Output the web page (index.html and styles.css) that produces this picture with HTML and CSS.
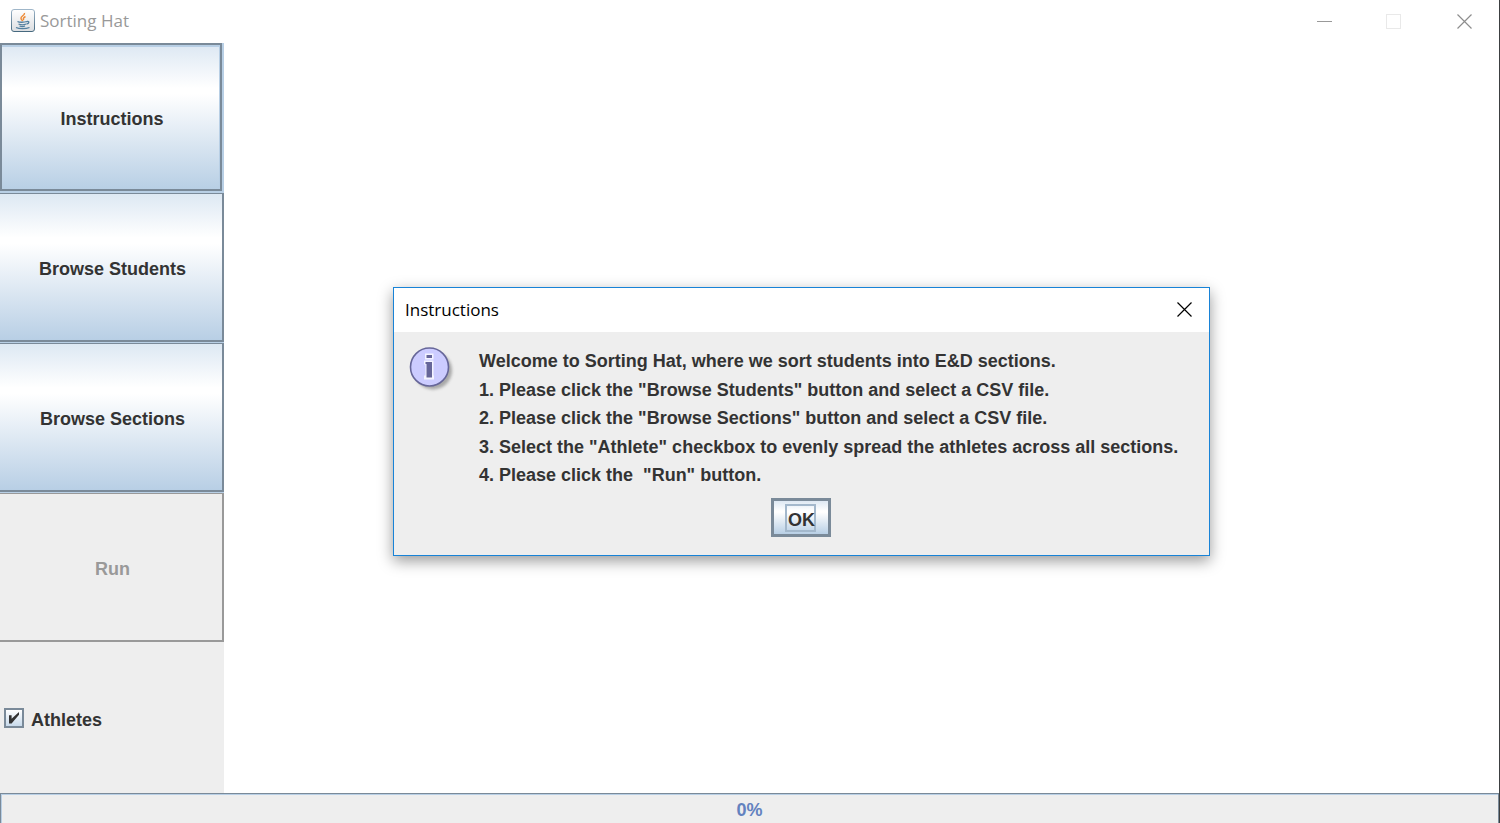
FILE: index.html
```html
<!DOCTYPE html>
<html lang="en">
<head>
<meta charset="utf-8">
<title>Sorting Hat</title>
<link rel="stylesheet" href="styles.css">
</head>
<body>
<div class="window">
  <header class="titlebar">
    <svg class="app-icon" width="24" height="24" viewBox="0 0 24 24" aria-hidden="true">
      <defs>
        <linearGradient id="frame" x1="0" y1="0" x2="0" y2="1"><stop offset="0" stop-color="#9fb6c9"/><stop offset="1" stop-color="#46697f"/></linearGradient>
        <linearGradient id="face" x1="0" y1="0" x2="0" y2="1"><stop offset="0" stop-color="#ffffff"/><stop offset="1" stop-color="#dcdee1"/></linearGradient>
      </defs>
      <rect x="0.5" y="0.5" width="23" height="22" rx="2.5" fill="url(#face)" stroke="url(#frame)"/>
      <path d="M13.500 4C14 6.500 9.500 7 10 9.500C10.200 10.800 11.500 11.500 11.800 12M14.500 7.500C12.500 8.500 11.800 9.500 12.800 11" fill="none" stroke="#ee8a35" stroke-width="1.500"/>
      <path d="M6.500 12.500C8 13.500 13 13.500 16 12.500M7.500 15C10 16 13 16 15 15M8.500 17C10.500 17.800 12.500 17.800 14 17M16 12.500C18.500 12 18.500 14.500 15.500 15M5 18.500C8 20 15 20 18.500 18.500" fill="none" stroke="#527f9f" stroke-width="1.300"/>
    </svg>
    <h1 class="title">Sorting Hat</h1>
    <div class="controls">
      <button class="control" type="button" aria-label="Minimize"><svg width="16" height="16" viewBox="0 0 16 16"><path d="M1 8.500H16" stroke="#999"/></svg></button>
      <button class="control" type="button" aria-label="Maximize" disabled><svg width="16" height="16" viewBox="0 0 16 16"><rect x="0.500" y="1.500" width="14" height="14" fill="none" stroke="#e9e9e9"/></svg></button>
      <button class="control" type="button" aria-label="Close"><svg width="16" height="16" viewBox="0 0 16 16"><path d="M1.500 1.500L15.500 15.500M15.500 1.500L1.500 15.500" stroke="#8d8d8d" stroke-width="1.200"/></svg></button>
    </div>
  </header>
  <main class="content">
    <nav class="sidebar">
      <button class="tile tile-active" type="button">Instructions</button>
      <button class="tile" type="button">Browse Students</button>
      <button class="tile" type="button">Browse Sections</button>
      <button class="tile" type="button" disabled>Run</button>
      <label class="option"><input class="check" type="checkbox" checked><span class="option-label">Athletes</span></label>
    </nav>
  </main>
  <footer class="progress" role="progressbar" aria-label="Progress" aria-valuemin="0" aria-valuemax="100" aria-valuenow="0">0%</footer>
</div>

<section class="dialog" role="dialog" aria-labelledby="dialog-title">
  <header class="dialog-bar">
    <h2 class="dialog-title" id="dialog-title">Instructions</h2>
    <button class="dialog-close" type="button" aria-label="Close"><svg width="16" height="16" viewBox="0 0 16 16"><path d="M0.500 0.500L14.500 14.500M14.500 0.500L0.500 14.500" stroke="#000" stroke-width="1.200"/></svg></button>
  </header>
  <div class="dialog-body">
    <svg class="info" width="48" height="48" viewBox="0 0 48 48" aria-hidden="true">
      <defs><filter id="soft" x="-20%" y="-20%" width="140%" height="140%"><feGaussianBlur stdDeviation="1.800"/></filter></defs>
      <circle cx="24" cy="23.500" r="19" fill="#8b8b8b" opacity="0.700" filter="url(#soft)"/>
      <circle cx="20.500" cy="20" r="19" fill="#ccccff" stroke="#666699" stroke-width="1.600"/>
      <path d="M16 6.500H24.500V12.500H16ZM15 13.500H24.500V28.500H25V32.500H15V28.500H16.500V17.500H15Z" fill="#f4f4ff"/>
      <path d="M17.500 8H23V11H17.500ZM16.500 15H23V30.500H17.500V17H16.500Z" fill="#666699"/>
    </svg>
    <div class="message">
      <p class="line">Welcome to Sorting Hat, where we sort students into E&amp;D sections.</p>
      <p class="line">1. Please click the "Browse Students" button and select a CSV file.</p>
      <p class="line">2. Please click the "Browse Sections" button and select a CSV file.</p>
      <p class="line">3. Select the "Athlete" checkbox to evenly spread the athletes across all sections.</p>
      <p class="line">4. Please click the&nbsp; "Run" button.</p>
    </div>
  </div>
  <div class="dialog-actions">
    <button class="ok" type="button"><span class="ok-label">OK</span></button>
  </div>
</section>
</body>
</html>
```

FILE: styles.css
```css
* {
  box-sizing: border-box;
}

body {
  margin: 0;
  background: #fff;
  color: #333;
  font: bold 18px "Liberation Sans", Arial, sans-serif;
}

h1, h2, p {
  margin: 0;
}

button {
  padding: 0;
  color: inherit;
  font: inherit;
}

.window {
  display: flex;
  flex-direction: column;
  min-height: 100vh;
  border-right: 1px solid #3c3f41;
}

.titlebar {
  display: flex;
  align-items: center;
  height: 43px;
  padding: 0 0 2px 11px;
}

.title,
.dialog-title {
  font: 17px/24px "Open Sans", "Noto Sans", sans-serif;
}

.title {
  margin-left: 5px;
  color: #999;
}

.controls {
  display: flex;
  margin-left: auto;
}

.control {
  display: grid;
  place-items: center;
  width: 70px;
  height: 40px;
  border: 0;
  background: none;
}

.content {
  display: flex;
  flex: 1;
}

.sidebar {
  display: flex;
  flex-direction: column;
  width: 224px;
  background: #eee;
}

.tile {
  height: 149px;
  margin-bottom: 1px;
  padding: 5px 0 0 3px;
  border: solid #7a8a99;
  border-width: 1px 2px 2px 0;
  background: linear-gradient(#dde8f3 0%, #fff 30%, #fff 34%, #b8cfe5 100%);
  box-shadow: 0 1px #b8cfe5;
}

.tile-active {
  height: 148px;
  margin: 0 2px 2px 0;
  padding-left: 2px;
  border-width: 2px;
  box-shadow: inset -1px 2px #b8cfe5, 2px 0 #b8cfe5, 0 2px #b8cfe5, 2px 2px #b8cfe5;
}

.tile:disabled {
  border-color: #999;
  background: #eee;
  box-shadow: none;
  color: #999;
}

.option {
  display: flex;
  flex: 1;
  align-items: center;
  gap: 7px;
  padding-left: 4px;
}

.option-label {
  padding-top: 4px;
}

.check {
  display: grid;
  place-items: center;
  width: 20px;
  height: 20px;
  margin: 0;
  border: 2px solid #7a8a99;
  background: linear-gradient(#fff, #c8daeb);
  appearance: none;
}

.check::after {
  content: "";
  width: 10px;
  height: 12px;
  background: #333;
  clip-path: polygon(0 28%, 26% 28%, 26% 56%, 100% 0, 100% 22%, 26% 96%, 0 96%);
}

.progress {
  display: grid;
  place-items: center;
  height: 30px;
  padding-top: 4px;
  border: solid #7a8a99;
  border-width: 1px 1px 0;
  background: #eee;
  box-shadow: inset 1px 1px #b8cfe5;
  color: #6382bf;
}

.dialog {
  position: absolute;
  top: 287px;
  left: 393px;
  width: 817px;
  border: 1px solid #1883d7;
  background: #eee;
  box-shadow: 0 5px 14px rgba(0, 0, 0, 0.4);
}

.dialog-bar {
  display: flex;
  align-items: center;
  justify-content: space-between;
  height: 44px;
  padding: 0 16px 0 11px;
  background: #fff;
  color: #000;
}

.dialog-close {
  display: grid;
  border: 0;
  background: none;
}

.dialog-body {
  display: flex;
  gap: 22px;
  padding: 15px 0 0 15px;
}

.info {
  flex: none;
}

.message {
  display: flex;
  flex-direction: column;
  justify-content: space-between;
  height: 142px;
}

.line {
  line-height: 28px;
  white-space: nowrap;
}

.dialog-actions {
  display: flex;
  justify-content: center;
  padding: 9px 2px 18px 0;
}

.ok {
  display: grid;
  place-items: center;
  width: 60px;
  height: 39px;
  border: 3px solid #7a8a99;
  background: linear-gradient(#dde8f3 0%, #fff 30%, #fff 34%, #b8cfe5 100%);
}

.ok-label {
  width: 31px;
  height: 28px;
  padding-left: 1px;
  border: 2px solid #a3b8cc;
  line-height: 28px;
}
```
